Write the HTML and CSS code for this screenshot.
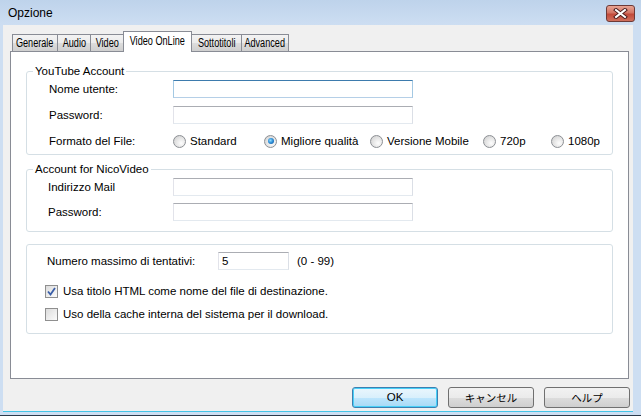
FILE: index.html
```html
<!DOCTYPE html>
<html lang="it">
<head>
  <meta charset="UTF-8">
  <title>Opzione</title>
  <link rel="stylesheet" href="styles.css">
</head>
<body>

  <div class="window">
    <div class="titlebar">
      <span class="title">Opzione</span>
      <div class="close">
        <svg width="15" height="11" viewBox="0 0 15 11">
          <path d="M3 2 L12 9 M12 2 L3 9" stroke="#4a1b1b" stroke-width="4" stroke-linecap="square"/>
          <path d="M3 2 L12 9 M12 2 L3 9" stroke="#ffffff" stroke-width="2" stroke-linecap="square"/>
        </svg>
      </div>
    </div>

    <div class="frame">
      <div class="client">
        <div class="tabs">
          <div class="tab w-gen"><span>Generale</span></div>
          <div class="tab w-aud"><span>Audio</span></div>
          <div class="tab w-vid"><span>Video</span></div>
          <div class="tab active"><span>Video OnLine</span></div>
          <div class="tab w-sub"><span>Sottotitoli</span></div>
          <div class="tab w-adv"><span>Advanced</span></div>
        </div>

        <div class="panel">
          <fieldset class="group youtube">
            <legend>YouTube Account</legend>
            <div class="row">
              <label>Nome utente:</label>
              <div class="field focus"></div>
            </div>
            <div class="row">
              <label>Password:</label>
              <div class="field"></div>
            </div>
            <div class="row formats">
              <label>Formato del File:</label>
              <div class="radios">
                <span class="opt"><i class="radio"></i>Standard</span>
                <span class="opt"><i class="radio on"></i>Migliore qualità</span>
                <span class="opt"><i class="radio"></i>Versione Mobile</span>
                <span class="opt"><i class="radio"></i>720p</span>
                <span class="opt"><i class="radio"></i>1080p</span>
              </div>
            </div>
          </fieldset>

          <fieldset class="group nico">
            <legend>Account for NicoVideo</legend>
            <div class="row">
              <label>Indirizzo Mail</label>
              <div class="field"></div>
            </div>
            <div class="row">
              <label>Password:</label>
              <div class="field"></div>
            </div>
          </fieldset>

          <div class="group misc">
            <div class="row">
              <label class="retry">Numero massimo di tentativi:</label>
              <div class="field small">5</div>
              <span class="range">(0 - 99)</span>
            </div>
            <div class="row check-row">
              <span class="check on">
                <svg width="9" height="9" viewBox="0 0 9 9">
                  <path d="M1 4.5 L3.5 7.5 L8 1" fill="none" stroke="#3a5ea8" stroke-width="1.8"/>
                </svg>
              </span>
              Usa titolo HTML come nome del file di destinazione.
            </div>
            <div class="row check-row">
              <span class="check"></span>
              Uso della cache interna del sistema per il download.
            </div>
          </div>
        </div>

        <div class="buttons">
          <div class="btn default">OK</div>
          <div class="btn jp">キャンセル</div>
          <div class="btn jp">ヘルプ</div>
        </div>
      </div>
    </div>
  </div>

</body>
</html>
```

FILE: styles.css
```css
body {
  margin: 0;
  font-family: "Liberation Sans", Arial, sans-serif;
  font-size: 11.5px;
  color: #000;
}
.window {
  width: 641px;
  height: 416px;
  display: flex;
  flex-direction: column;
  background: linear-gradient(#bed3eb, #cddef2 25px, #cddef2);
}
.titlebar {
  height: 25px;
  display: flex;
  justify-content: space-between;
  padding: 0 6px 0 8px;
}
.title {
  font-size: 12px;
  line-height: 26px;
}
.close {
  width: 29px;
  height: 17px;
  margin-top: 5px;
  box-sizing: border-box;
  border: 1px solid #6d3a37;
  border-radius: 3px;
  background: linear-gradient(#e8a493, #d37565 45%, #c24a3a 55%, #d0705d);
  display: flex;
  align-items: center;
  justify-content: center;
}
.frame {
  flex: 1;
  display: flex;
  padding: 0 8px 3px 3px;
  border-bottom: 1px solid #2b3a4a;
}
.client {
  flex: 1;
  background: #f0f0f0;
  padding: 6px 4px 0 7px;
  border-bottom: 1px solid #44c4e6;
}

/* onglets */
.tabs {
  display: flex;
  align-items: flex-end;
  height: 20px;
  margin-left: 2px;
  position: relative;
  z-index: 1;
}
.tab {
  height: 17px;
  box-sizing: border-box;
  border: 1px solid #898c95;
  border-bottom: none;
  margin-right: -1px;
  background: linear-gradient(#f3f3f3, #ebebeb 50%, #dddddd 50%, #cfcfcf);
  display: flex;
  justify-content: center;
  font-size: 12px;
  line-height: 16px;
  white-space: nowrap;
}
.tab span {
  display: inline-block;
  transform: scaleX(0.76);
}
.w-gen { width: 46px; }
.w-aud { width: 34px; }
.w-vid { width: 34px; }
.w-sub { width: 51px; }
.w-adv { width: 48px; }
.tab.active {
  width: 69px;
  height: 21px;
  margin-bottom: -1px;
  background: #fff;
  line-height: 19px;
}

.panel {
  height: 328px;
  box-sizing: border-box;
  background: #fff;
  border: 1px solid #898c95;
  padding: 12px 15px 0;
}

/* groupes */
.group {
  border: 1px solid #d5dfe5;
  border-radius: 3px;
  margin: 0;
  min-width: 0;
}
.group legend {
  margin-left: 6px;
  padding: 0 2px;
  line-height: 14px;
}
.youtube { padding: 2px 0 4px; }
.nico { margin-top: 7px; padding: 2px 0 10px; }
.misc { margin-top: 12px; padding: 7px 0 12px; }

.row {
  display: flex;
  align-items: center;
  height: 18px;
  padding-left: 22px;
}
.row label { width: 124px; }
.nico .row { padding-left: 21px; }
.nico .row label { width: 125px; }
.youtube .row + .row { margin-top: 8px; }
.youtube .formats { margin-top: 9px; }
.nico .row + .row { margin-top: 7px; }

.field {
  width: 240px;
  height: 18px;
  box-sizing: border-box;
  border: 1px solid;
  border-color: #abadb3 #dbdfe6 #e3e9ef #e2e3ea;
  background: #fff;
}
.field.focus { border-color: #3d7bad #a4c9e3 #b5cfe7 #a4c9e3; }

.radios { display: flex; }
.opt {
  display: flex;
  align-items: center;
  gap: 4px;
}
.opt:nth-child(1) { width: 91px; }
.opt:nth-child(2) { width: 106px; }
.opt:nth-child(3) { width: 113px; }
.opt:nth-child(4) { width: 68px; }
.radio {
  width: 13px;
  height: 13px;
  box-sizing: border-box;
  border-radius: 50%;
  border: 1px solid #8c8f94;
  background: radial-gradient(circle at 65% 65%, #fdfdfd, #e0e0e0 60%, #c9c9c9);
  display: flex;
  align-items: center;
  justify-content: center;
}
.radio.on::after {
  content: "";
  width: 6px;
  height: 6px;
  border-radius: 50%;
  background: radial-gradient(circle at 40% 40%, #8fdcff, #2a8ad4 50%, #134a8f);
}

.misc .row { padding-left: 20px; }
.retry { width: 171px !important; }
.field.small {
  width: 71px;
  padding-left: 3px;
  line-height: 16px;
}
.range { margin-left: 8px; }
.check-row {
  height: 14px;
  padding-left: 18px !important;
  gap: 5px;
}
.misc .row + .check-row { margin-top: 14px; }
.misc .check-row + .check-row { margin-top: 9px; }
.check {
  width: 13px;
  height: 13px;
  box-sizing: border-box;
  border: 1px solid #8f8f8f;
  background: linear-gradient(135deg, #dcdcdc, #fbfbfb);
  display: flex;
  align-items: center;
  justify-content: center;
}

/* boutons */
.buttons {
  display: flex;
  justify-content: flex-end;
  gap: 10px;
  margin-top: 8px;
  margin-right: -1px;
}
.btn {
  width: 86px;
  height: 21px;
  box-sizing: border-box;
  border: 1px solid #707070;
  border-radius: 3px;
  background: linear-gradient(#f2f2f2, #ebebeb 50%, #dddddd 50%, #cfcfcf);
  text-align: center;
  line-height: 19px;
}
.btn.default {
  border-color: #3c7fb1;
  box-shadow: inset 0 0 0 1px #48d0f8;
  background: linear-gradient(#eaf6fd, #d9f0fc 50%, #bee6fd 50%, #a7d9f5);
}
.btn.jp {
  font-family: "Noto Sans CJK JP", sans-serif;
  font-size: 10.5px;
}
```
